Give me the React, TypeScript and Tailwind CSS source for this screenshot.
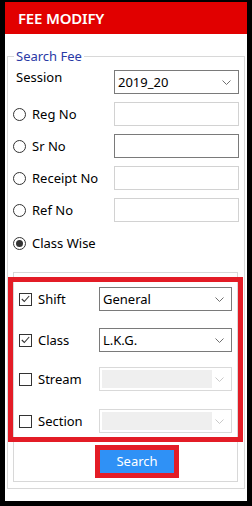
import React from "react";

function Chevron({ light }: { light?: boolean }) {
  return (
    <svg width="9" height="5" viewBox="0 0 9 5" className="shrink-0">
      <path d="M0.5 0.5 L4.5 4.5 L8.5 0.5" fill="none" stroke={light ? "#c9c9c9" : "#6f6f6f"} strokeWidth="1" />
    </svg>
  );
}

function Select({ value, width, disabled }: { value?: string; width: string; disabled?: boolean }) {
  if (disabled) {
    return (
      <div className={`${width} h-[24px] ml-auto flex items-center border border-[#d9d9d9] bg-white pl-[2px] pr-[7px]`}>
        <div className="h-[18px] w-[110px] bg-[#efefef]" />
        <div className="ml-auto">
          <Chevron light />
        </div>
      </div>
    );
  }
  return (
    <div className={`${width} h-[24px] ml-auto flex items-center border border-[#7a7a7a] bg-white pl-[3px] pr-[7px]`}>
      <span className="text-[13px] leading-none text-black">{value}</span>
      <div className="ml-auto">
        <Chevron />
      </div>
    </div>
  );
}

function Radio({ checked }: { checked?: boolean }) {
  return (
    <span className="flex h-[13px] w-[13px] shrink-0 items-center justify-center rounded-full border border-[#333] bg-white">
      {checked && <span className="h-[7px] w-[7px] rounded-full bg-[#333]" />}
    </span>
  );
}

function Check({ checked }: { checked?: boolean }) {
  return (
    <span className="flex h-[13px] w-[13px] shrink-0 items-center justify-center border border-[#333] bg-white">
      {checked && (
        <svg width="9" height="8" viewBox="0 0 9 8">
          <path d="M0.8 4 L3.3 6.5 L8.2 1" fill="none" stroke="#333" strokeWidth="1.1" />
        </svg>
      )}
    </span>
  );
}

const radioRows = [
  { label: "Reg No", border: "border-[#d2d2d2]" },
  { label: "Sr No", border: "border-[#7a7a7a]" },
  { label: "Receipt No", border: "border-[#d2d2d2]" },
  { label: "Ref No", border: "border-[#d2d2d2]" },
];

const filterRows = [
  { label: "Shift", checked: true, value: "General", mt: "mt-0" },
  { label: "Class", checked: true, value: "L.K.G.", mt: "mt-[17px]" },
  { label: "Stream", checked: false, value: "", mt: "mt-[15px]" },
  { label: "Section", checked: false, value: "", mt: "mt-[18px]" },
];

export default function App() {
  return (
    <div className="h-[506px] w-[252px] bg-black px-[5px] pt-[2px] pb-[5px] font-['Noto_Sans',sans-serif]">
      <div className="relative h-[499px] w-[242px] bg-white">
        <div className="flex h-[32px] items-center bg-[#e10000] pl-[13px] text-[15px] font-semibold tracking-[-0.2px] text-white">
          FEE MODIFY
        </div>

        <fieldset className="mx-[2px] mt-[13px] border border-[#d8d8d8]">
          <legend className="ml-[6px] px-[2px] text-[13px] leading-[18px] text-[#2a3aa6]">Search Fee</legend>

          <div className="mt-[5px] flex items-start pl-[8px] pr-[5px]">
            <span className="text-[13px] leading-[14px] text-black">Session</span>
            <Select value="2019_20" width="w-[125px]" />
          </div>

          {radioRows.map((row) => (
            <div key={row.label} className="mt-[8px] flex h-[24px] items-center gap-[6px] pl-[5px] pr-[5px]">
              <Radio />
              <span className="text-[13px] leading-none text-black">{row.label}</span>
              <div className={`ml-auto h-[24px] w-[125px] border ${row.border} bg-white`} />
            </div>
          ))}

          <div className="mt-[9px] flex h-[24px] items-center gap-[6px] pl-[5px]">
            <Radio checked />
            <span className="text-[13px] leading-none text-black">Class Wise</span>
          </div>

          <div className="mt-[17px] mb-[6px] ml-[5px] mr-[6px] border border-[#d8d8d8] pt-[14px] pb-[3px]">
            {filterRows.map((row) => (
              <div key={row.label} className={`${row.mt} flex h-[24px] items-center gap-[6px] pl-[5px] pr-[5px]`}>
                <Check checked={row.checked} />
                <span className="text-[13px] leading-none text-black">{row.label}</span>
                <Select value={row.value} width="w-[133px]" disabled={!row.checked} />
              </div>
            ))}

            <button className="mt-[12px] ml-[81px] flex h-[33px] w-[84px] items-center justify-center border-[5px] border-[#e31c26] bg-[#2f91f6] text-[13px] leading-none text-white">
              Search
            </button>
          </div>
        </fieldset>

        <div className="pointer-events-none absolute left-[3px] top-[275px] h-[165px] w-[235px] border-[5px] border-[#e31c26]" />
      </div>
    </div>
  );
}
